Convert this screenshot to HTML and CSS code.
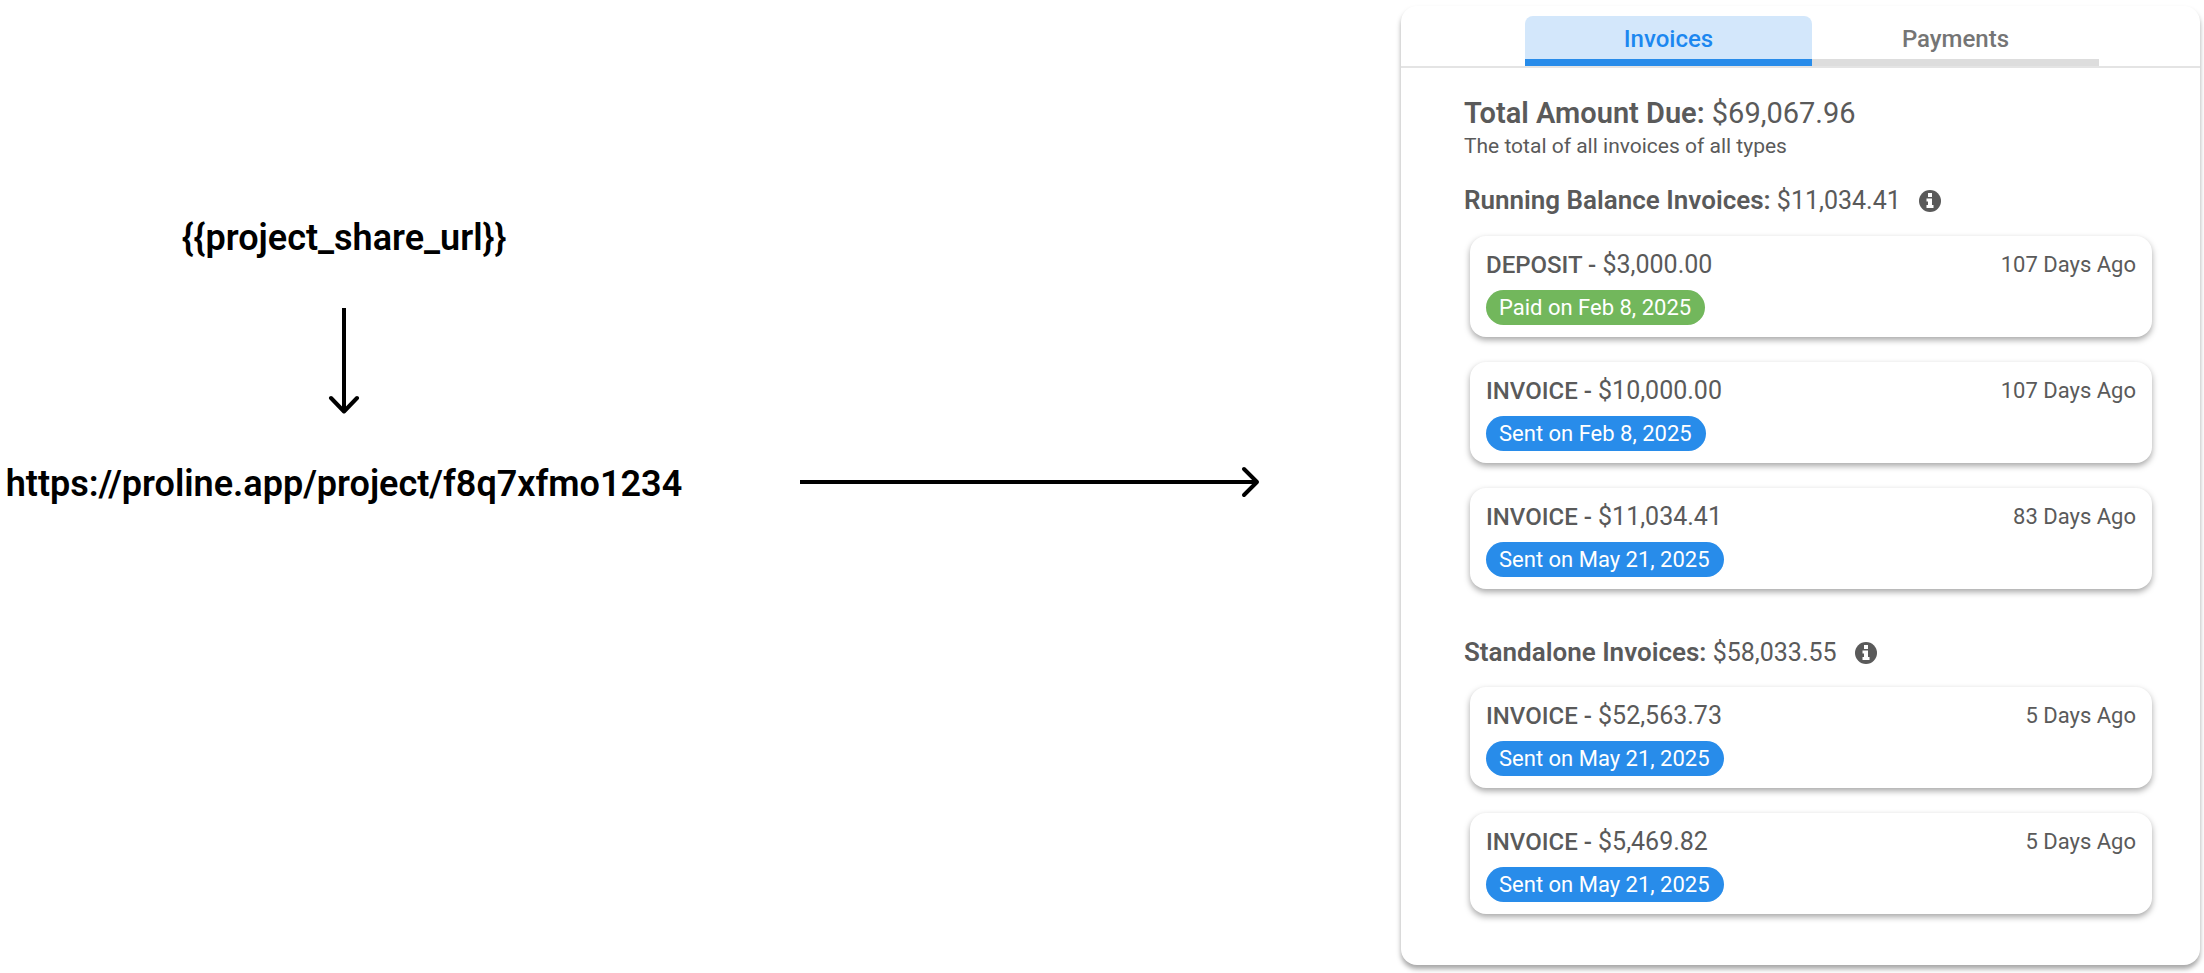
FILE: index.html
```
<!DOCTYPE html>
<html lang="en">
<head>
    <meta charset="UTF-8">
    <meta name="viewport" content="width=device-width, initial-scale=1.0">
    <title>Project Share Link</title>
    <link rel="stylesheet" href="styles.css">
</head>
<body>
    <main class="page">
        <div class="flow">
            <p class="flow-text">{{project_share_url}}</p>
            <svg class="arrow-down" width="34" height="106" viewBox="0 0 34 106" fill="none" stroke="#000">
                <path d="M17 0V102" stroke-width="4"/>
                <path d="M4 90L17 103.500L30 90" stroke-width="4" stroke-linecap="round" stroke-linejoin="round"/>
            </svg>
            <p class="flow-text">https://proline.app/project/f8q7xfmo1234</p>
        </div>

        <div class="link">
            <div class="link-line"></div>
            <svg class="link-head" width="20" height="32" viewBox="0 0 20 32" fill="none" stroke="#000" stroke-width="4" stroke-linecap="round" stroke-linejoin="round">
                <path d="M0 16H16" stroke-linecap="butt"/>
                <path d="M4 3L17 16L4 29"/>
            </svg>
        </div>

        <section class="panel">
            <div class="tabs">
                <button class="tab tab-active">Invoices</button>
                <button class="tab">Payments</button>
            </div>
            <div class="content">
                <h1 class="total"><b>Total Amount Due:</b> $69,067.96</h1>
                <p class="total-note">The total of all invoices of all types</p>

                <h2 class="group-title">
                    <span><b>Running Balance Invoices:</b> $11,034.41</span>
                    <svg class="info" viewBox="0 0 22 22">
                        <circle cx="11" cy="11" r="11" fill="#5a5a5a"/>
                        <path fill="#fff" d="M9 3h4v4H9zM7.500 8.500H13V15h1.500v3h-7v-3H9v-3.500H7.500z"/>
                    </svg>
                </h2>
                <div class="cards">
                    <article class="card">
                        <div class="card-top">
                            <h3 class="card-title"><b>DEPOSIT -</b> $3,000.00</h3>
                            <span class="age">107 Days Ago</span>
                        </div>
                        <span class="badge badge-green">Paid on Feb 8, 2025</span>
                    </article>
                    <article class="card">
                        <div class="card-top">
                            <h3 class="card-title"><b>INVOICE -</b> $10,000.00</h3>
                            <span class="age">107 Days Ago</span>
                        </div>
                        <span class="badge">Sent on Feb 8, 2025</span>
                    </article>
                    <article class="card">
                        <div class="card-top">
                            <h3 class="card-title"><b>INVOICE -</b> $11,034.41</h3>
                            <span class="age">83 Days Ago</span>
                        </div>
                        <span class="badge">Sent on May 21, 2025</span>
                    </article>
                </div>

                <h2 class="group-title group-title-next">
                    <span><b>Standalone Invoices:</b> $58,033.55</span>
                    <svg class="info" viewBox="0 0 22 22">
                        <circle cx="11" cy="11" r="11" fill="#5a5a5a"/>
                        <path fill="#fff" d="M9 3h4v4H9zM7.500 8.500H13V15h1.500v3h-7v-3H9v-3.500H7.500z"/>
                    </svg>
                </h2>
                <div class="cards">
                    <article class="card">
                        <div class="card-top">
                            <h3 class="card-title"><b>INVOICE -</b> $52,563.73</h3>
                            <span class="age">5 Days Ago</span>
                        </div>
                        <span class="badge">Sent on May 21, 2025</span>
                    </article>
                    <article class="card">
                        <div class="card-top">
                            <h3 class="card-title"><b>INVOICE -</b> $5,469.82</h3>
                            <span class="age">5 Days Ago</span>
                        </div>
                        <span class="badge">Sent on May 21, 2025</span>
                    </article>
                </div>
            </div>
        </section>
    </main>
</body>
</html>
```

FILE: styles.css
```
* {
    box-sizing: border-box;
}
body {
    font-family: Roboto, Arial, sans-serif;
    margin: 0;
    background-color: #fff;
    color: #5a5a5a;
}
h1, h2, h3, p {
    margin: 0;
    font-weight: 400;
}
.page {
    display: grid;
    grid-template-columns: 688fr 713fr 799fr;
    align-items: start;
    padding: 6px 4px 8px 0;
}

/* Left side: variable -> link */
.flow {
    display: flex;
    flex-direction: column;
    align-items: center;
    gap: 48px;
    padding-top: 210px;
}
.flow-text {
    font-size: 36px;
    line-height: 44px;
    font-weight: 600;
    color: #000;
    white-space: nowrap;
}
.arrow-down {
    display: block;
}

/* Arrow to the panel */
.link {
    display: flex;
    align-items: center;
    padding: 460px 141px 0 112px;
}
.link-line {
    flex: 1;
    height: 4px;
    background-color: #000;
}
.link-head {
    flex: none;
}

.panel {
    border-radius: 16px;
    background-color: #fff;
    box-shadow: 0 4px 5px rgba(0, 0, 0, 0.35);
}
.tabs {
    display: flex;
    justify-content: center;
    padding: 10px 101px 0 124px;
    border-bottom: 2px solid #e4e4e4;
}
.tab {
    flex: 1;
    height: 50px;
    padding: 2px 0 0;
    border: none;
    border-bottom: 7px solid #ddd;
    background-color: transparent;
    color: #757575;
    font-family: inherit;
    font-size: 24px;
    font-weight: 500;
    cursor: pointer;
}
.tab-active {
    border-bottom-color: #288cea;
    border-radius: 8px 8px 0 0;
    background-color: #d3e7fb;
    color: #1c87f0;
}
.content {
    padding: 27px 48px 51px 63px;
}
.total {
    font-size: 29px;
    line-height: 36px;
}
.total b {
    font-weight: 600;
}
.total-note {
    font-size: 21px;
    line-height: 30px;
}
.group-title {
    display: flex;
    align-items: center;
    gap: 18px;
    margin: 24px 0 19px;
    font-size: 25px;
    line-height: 32px;
}
.group-title b {
    font-size: 26px;
    line-height: 1;
    font-weight: 600;
}
.group-title-next {
    margin-top: 48px;
    margin-bottom: 18px;
}
.info {
    width: 22px;
    height: 22px;
}
.cards {
    display: flex;
    flex-direction: column;
    gap: 25px;
    padding-left: 6px;
}
.card {
    padding: 14px 16px 12px;
    border-radius: 16px;
    background-color: #fff;
    box-shadow: 0 3px 6px rgba(0, 0, 0, 0.35);
}
.card-top {
    display: flex;
    justify-content: space-between;
    align-items: center;
    margin-bottom: 10px;
}
.card-title {
    font-size: 25px;
    line-height: 30px;
}
.card-title b {
    font-size: 24px;
    line-height: 1;
    font-weight: 500;
}
.age {
    font-size: 22px;
    line-height: 30px;
}
.badge {
    display: block;
    width: fit-content;
    padding: 0 14px 0 13px;
    border-radius: 18px;
    background-color: #288cea;
    color: #fff;
    font-size: 22px;
    line-height: 35px;
}
.badge-green {
    background-color: #72b75c;
}
```
